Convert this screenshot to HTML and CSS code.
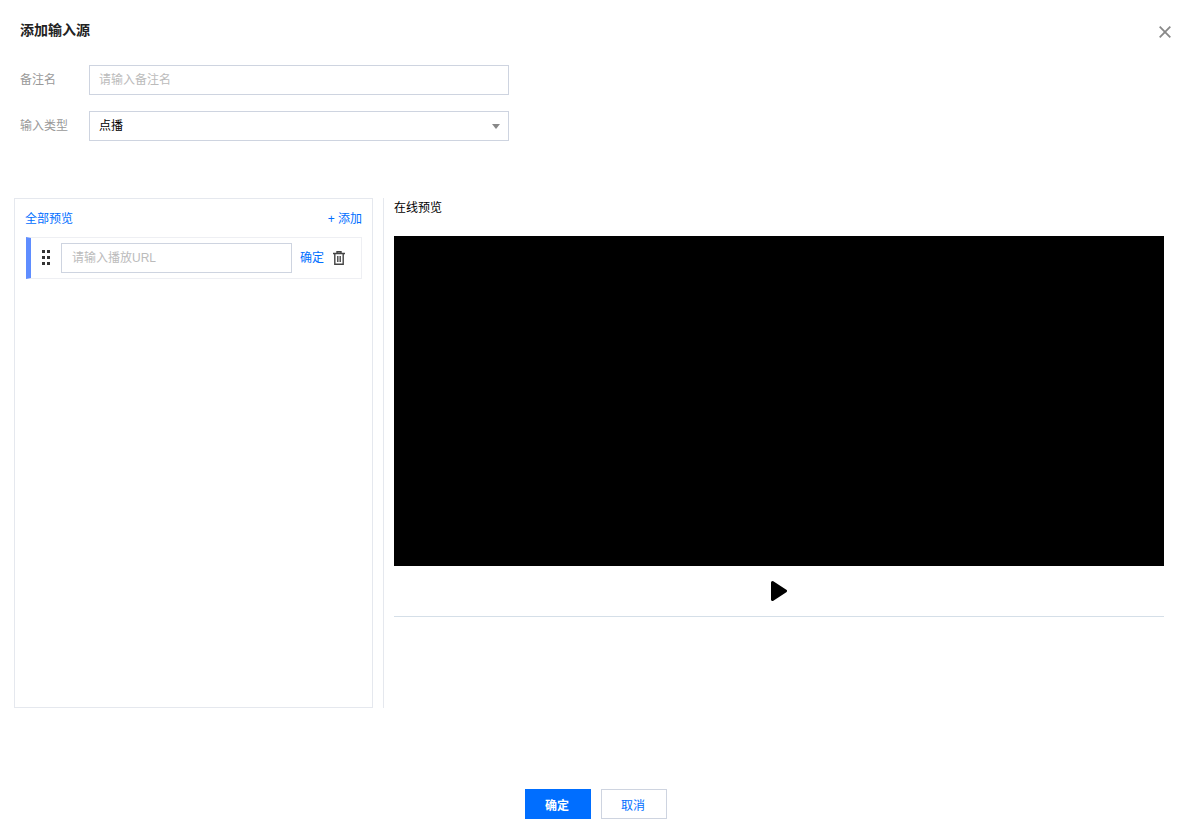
FILE: index.html
```html
<!DOCTYPE html>
<html lang="zh-CN">
<head>
<meta charset="utf-8">
<title>添加输入源</title>
<link rel="stylesheet" href="styles.css">
</head>
<body>
<div class="dialog">
  <header class="head">
    <h1 class="title">添加输入源</h1>
    <svg class="close" width="12" height="12" viewBox="0 0 12 12"><path d="M.7.7l10.6 10.6M11.3.7L.7 11.3" stroke="#888" stroke-width="1.8" fill="none"/></svg>
  </header>
  <form class="form">
    <div class="field">
      <span class="label">备注名</span>
      <div class="input placeholder">请输入备注名</div>
    </div>
    <div class="field">
      <span class="label">输入类型</span>
      <div class="input select">点播<i class="caret"></i></div>
    </div>
  </form>
  <main class="main">
    <section class="panel">
      <div class="panel-head">
        <span>全部预览</span>
        <span>+ 添加</span>
      </div>
      <div class="item">
        <svg class="grip" width="8" height="16" viewBox="0 0 8 16"><g fill="#333"><rect x="0" y="0" width="3" height="3"/><rect x="5" y="0" width="3" height="3"/><rect x="0" y="6" width="3" height="3"/><rect x="5" y="6" width="3" height="3"/><rect x="0" y="12" width="3" height="3"/><rect x="5" y="12" width="3" height="3"/></g></svg>
        <div class="url placeholder">请输入播放URL</div>
        <span class="ok">确定</span>
        <svg class="trash" width="12" height="14" viewBox="0 0 12 14"><path d="M0 2.500h12M4 2.500V.8h4v1.700M1.800 2.500v10.700h8.400V2.500M4.800 5v6M7.200 5v6" stroke="#444" stroke-width="1.400" fill="none"/></svg>
      </div>
    </section>
    <section class="preview">
      <div class="preview-title">在线预览</div>
      <div class="video"></div>
      <div class="controls">
        <svg width="16" height="20" viewBox="0 0 16 20"><path d="M1.500 1.500L14.500 10 1.500 18.500z" fill="#000" stroke="#000" stroke-width="3" stroke-linejoin="round"/></svg>
      </div>
    </section>
  </main>
  <footer class="foot">
    <button class="btn primary" type="button">确定</button>
    <button class="btn" type="button">取消</button>
  </footer>
</div>
</body>
</html>
```
FILE: styles.css
```css
* { box-sizing: border-box; }
html, body { margin: 0; padding: 0; }
body {
  background: #fff;
  font-family: "Liberation Sans", "Noto Sans CJK SC", sans-serif;
  font-size: 12px;
  color: #000;
}
.dialog { width: 1192px; height: 839px; padding: 0 28px 0 14px; }
.head {
  height: 65px;
  display: flex;
  justify-content: space-between;
  margin-right: -7px;
  padding: 21px 0 0 6px;
}
.title { margin: 0; font-size: 14px; font-weight: 700; line-height: 18px; color: #222; }
.close { margin-top: 5px; }
.form { display: flex; flex-direction: column; gap: 16px; padding-left: 6px; }
.field { display: flex; align-items: center; height: 30px; }
.label { width: 69px; color: #999; line-height: 18px; }
.input {
  width: 420px;
  height: 30px;
  border: 1px solid #ced4e0;
  padding: 0 9px;
  line-height: 28px;
  position: relative;
}
.placeholder { color: #bbb; }
.caret {
  position: absolute;
  right: 8px;
  top: 12px;
  border: 4px solid transparent;
  border-top: 5px solid #888;
  border-bottom: 0;
}
.main { display: flex; margin-top: 57px; height: 510px; }
.panel { width: 359px; border: 1px solid #e5e8ee; padding: 11px 10px 0 11px; }
.panel-head {
  display: flex;
  justify-content: space-between;
  margin-left: -1px;
  color: #006eff;
  line-height: 18px;
}
.item {
  display: flex;
  align-items: center;
  height: 42px;
  margin-top: 9px;
  border: 1px solid #eeeff3;
  border-left: 5px solid #5f8dff;
  padding-left: 11px;
}
.grip { flex: none; }
.url {
  width: 231px;
  height: 30px;
  margin-left: 11px;
  border: 1px solid #ced4e0;
  padding: 0 10px;
  line-height: 28px;
}
.ok { margin-left: 8px; color: #006eff; line-height: 18px; }
.trash { margin-left: 9px; }
.preview {
  flex: 1;
  margin-left: 10px;
  border-left: 1px solid #e5e8ee;
  padding-left: 10px;
}
.preview-title { line-height: 18px; padding-top: 1px; }
.video { height: 330px; margin-top: 19px; background: #000; }
.controls {
  height: 51px;
  display: flex;
  align-items: center;
  justify-content: center;
  border-bottom: 1px solid #d5dfe8;
}
.foot { display: flex; justify-content: center; gap: 10px; margin-top: 81px; padding-left: 6px; margin-right: -8px; }
.btn {
  width: 66px;
  height: 30px;
  border: 1px solid #ced4e0;
  background: #fff;
  color: #006eff;
  font: inherit;
  padding: 0 2px 0 0;
}
.primary { background: #006eff; border-color: #006eff; color: #fff; font-weight: 700; }
```
